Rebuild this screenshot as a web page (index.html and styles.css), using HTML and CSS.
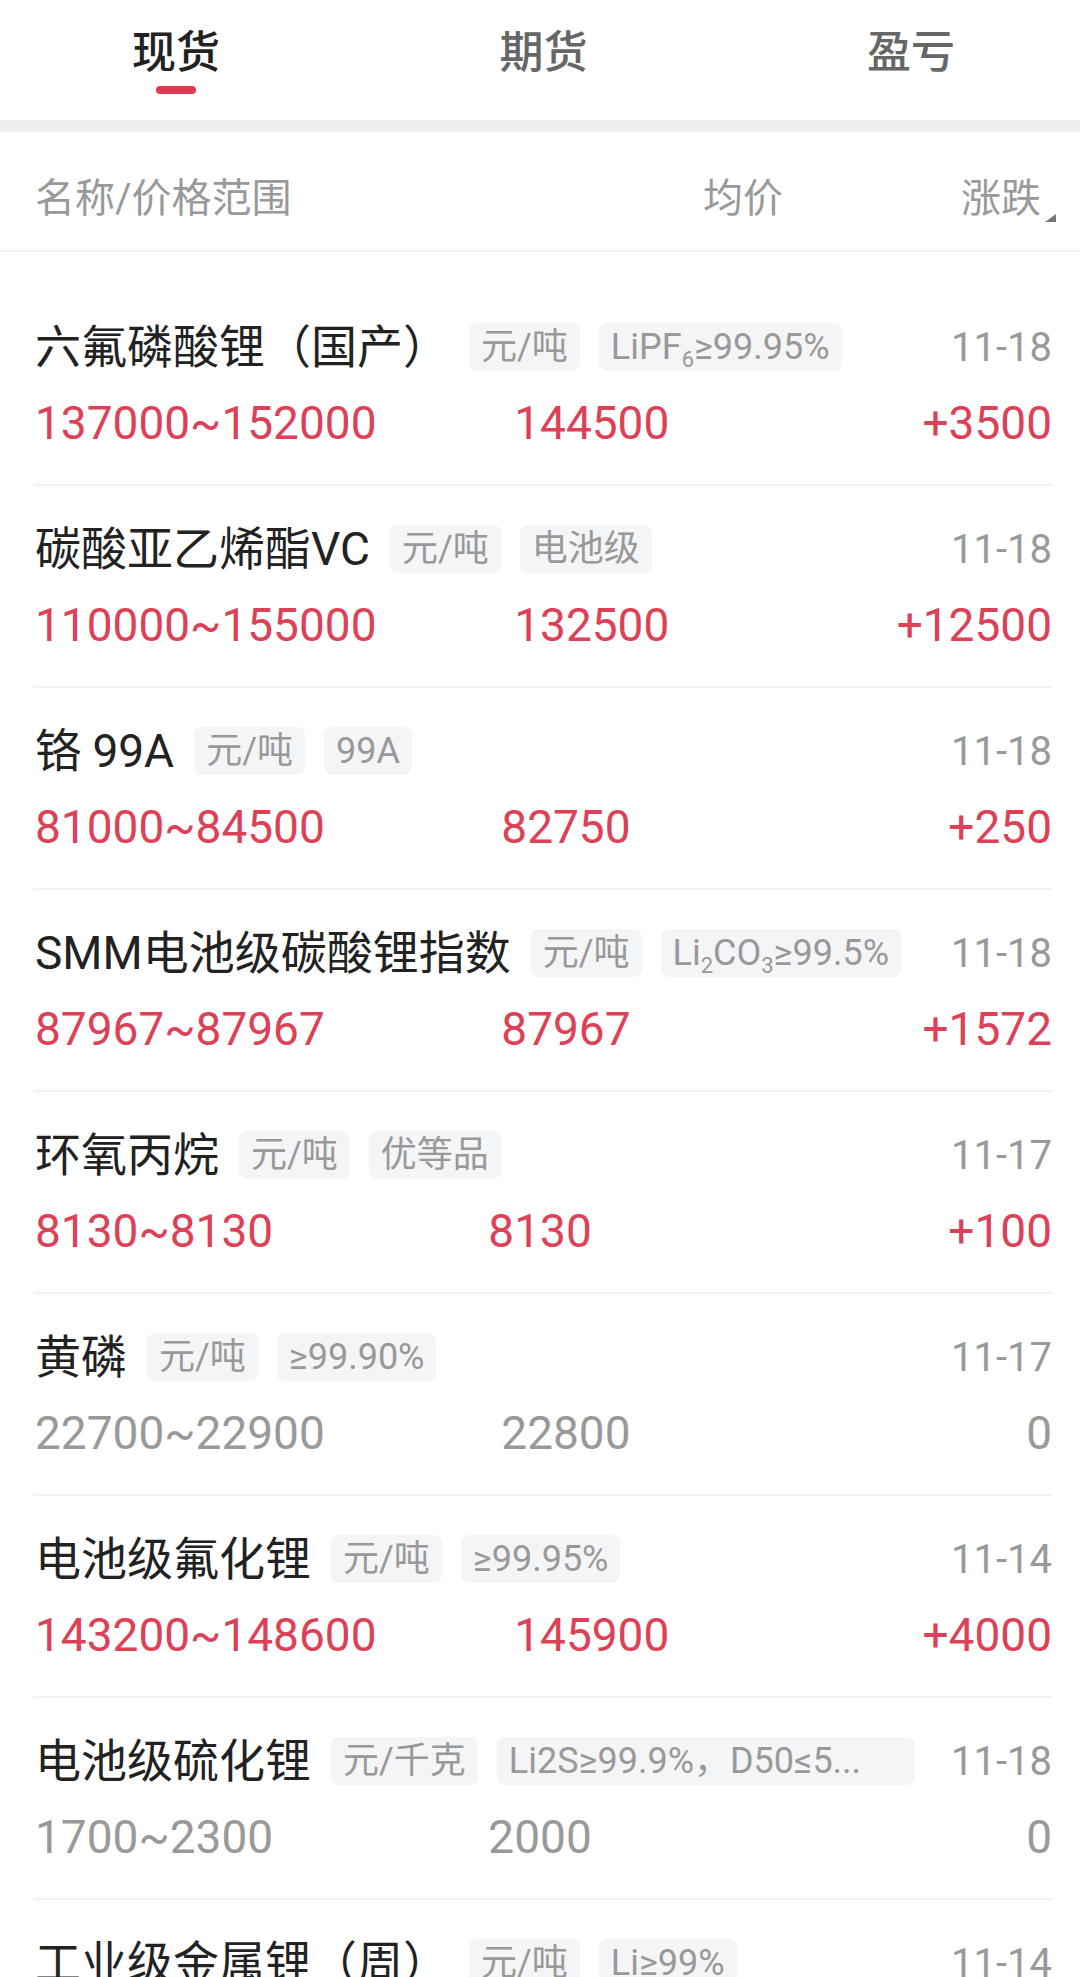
FILE: index.html
```html
<!DOCTYPE html>
<html lang="zh-CN">
<head>
  <meta charset="UTF-8">
  <meta name="viewport" content="width=device-width, initial-scale=1.0">
  <title>现货价格</title>
  <link rel="stylesheet" href="styles.css">
</head>
<body>
  <div class="tabs">
    <div class="tab active">现货<span class="tab-bar"></span></div>
    <div class="tab">期货<span class="tab-bar"></span></div>
    <div class="tab">盈亏<span class="tab-bar"></span></div>
  </div>
  <div class="gap"></div>

  <div class="head">
    <div class="head-name">名称/价格范围</div>
    <div class="head-avg">均价</div>
    <div class="head-chg">涨跌<span class="sort"></span></div>
  </div>

  <div class="list">
    <div class="row">
      <div class="row-top">
        <div class="info">
          <span class="name">六氟磷酸锂（国产）</span>
          <span class="tag">元/吨</span>
          <span class="tag">LiPF<span class="sub">6</span>≥99.95%</span>
        </div>
        <span class="date">11-18</span>
      </div>
      <div class="prices up">
        <span class="range">137000~152000</span>
        <span class="avg">144500</span>
        <span class="chg">+3500</span>
      </div>
    </div>

    <div class="row">
      <div class="row-top">
        <div class="info">
          <span class="name">碳酸亚乙烯酯VC</span>
          <span class="tag">元/吨</span>
          <span class="tag">电池级</span>
        </div>
        <span class="date">11-18</span>
      </div>
      <div class="prices up">
        <span class="range">110000~155000</span>
        <span class="avg">132500</span>
        <span class="chg">+12500</span>
      </div>
    </div>

    <div class="row">
      <div class="row-top">
        <div class="info">
          <span class="name">铬 99A</span>
          <span class="tag">元/吨</span>
          <span class="tag">99A</span>
        </div>
        <span class="date">11-18</span>
      </div>
      <div class="prices up">
        <span class="range">81000~84500</span>
        <span class="avg">82750</span>
        <span class="chg">+250</span>
      </div>
    </div>

    <div class="row">
      <div class="row-top">
        <div class="info">
          <span class="name">SMM电池级碳酸锂指数</span>
          <span class="tag">元/吨</span>
          <span class="tag">Li<span class="sub">2</span>CO<span class="sub">3</span>≥99.5%</span>
        </div>
        <span class="date">11-18</span>
      </div>
      <div class="prices up">
        <span class="range">87967~87967</span>
        <span class="avg">87967</span>
        <span class="chg">+1572</span>
      </div>
    </div>

    <div class="row">
      <div class="row-top">
        <div class="info">
          <span class="name">环氧丙烷</span>
          <span class="tag">元/吨</span>
          <span class="tag">优等品</span>
        </div>
        <span class="date">11-17</span>
      </div>
      <div class="prices up">
        <span class="range">8130~8130</span>
        <span class="avg">8130</span>
        <span class="chg">+100</span>
      </div>
    </div>

    <div class="row">
      <div class="row-top">
        <div class="info">
          <span class="name">黄磷</span>
          <span class="tag">元/吨</span>
          <span class="tag">≥99.90%</span>
        </div>
        <span class="date">11-17</span>
      </div>
      <div class="prices flat">
        <span class="range">22700~22900</span>
        <span class="avg">22800</span>
        <span class="chg">0</span>
      </div>
    </div>

    <div class="row">
      <div class="row-top">
        <div class="info">
          <span class="name">电池级氟化锂</span>
          <span class="tag">元/吨</span>
          <span class="tag">≥99.95%</span>
        </div>
        <span class="date">11-14</span>
      </div>
      <div class="prices up">
        <span class="range">143200~148600</span>
        <span class="avg">145900</span>
        <span class="chg">+4000</span>
      </div>
    </div>

    <div class="row">
      <div class="row-top">
        <div class="info">
          <span class="name">电池级硫化锂</span>
          <span class="tag">元/千克</span>
          <span class="tag tag-long">Li2S≥99.9%，D50≤5...</span>
        </div>
        <span class="date">11-18</span>
      </div>
      <div class="prices flat">
        <span class="range">1700~2300</span>
        <span class="avg">2000</span>
        <span class="chg">0</span>
      </div>
    </div>

    <div class="row">
      <div class="row-top">
        <div class="info">
          <span class="name">工业级金属锂（周）</span>
          <span class="tag">元/吨</span>
          <span class="tag">Li≥99%</span>
        </div>
        <span class="date">11-14</span>
      </div>
    </div>
  </div>
</body>
</html>
```

FILE: styles.css
```css
html, body {
  margin: 0;
  padding: 0;
}
body {
  width: 1080px;
  height: 1977px;
  overflow: hidden;
  background: #fff;
  font-family: Roboto, "Noto Sans CJK SC", sans-serif;
  color: #222;
}

.tabs {
  height: 120px;
  display: flex;
  justify-content: space-between;
  padding: 0 125px 0 132px;
  box-sizing: border-box;
}
.tab {
  display: flex;
  flex-direction: column;
  align-items: center;
  padding-top: 27px;
  font-size: 44px;
  line-height: 52px;
  font-weight: 500;
  color: #666;
}
.tab.active {
  color: #222;
}
.tab-bar {
  width: 40px;
  height: 8px;
  margin-top: 7px;
  border-radius: 4px;
}
.tab.active .tab-bar {
  background: #e23a50;
}

.gap {
  height: 12px;
  background: #eeeeee;
}

.head {
  height: 110px;
  padding: 8px 24px 0 35px;
  display: flex;
  align-items: center;
  border-bottom: 2px solid #f2f2f2;
  font-size: 40px;
  color: #999;
}
.head-name {
  flex: 1;
}
.head-avg {
  margin-right: 178px;
}
.head-chg {
  position: relative;
  padding-right: 15px;
}
.sort {
  position: absolute;
  right: 0;
  bottom: 2px;
  width: 0;
  height: 0;
  border-left: 11px solid transparent;
  border-bottom: 8px solid #777;
}

.list {
  padding-top: 32px;
}
.row {
  margin: 0 28px 0 33px;
  padding: 39px 0 33px 2px;
  border-bottom: 2px solid #f2f2f2;
}
.row-top {
  display: flex;
  align-items: center;
  height: 48px;
}
.info {
  flex: 1;
  min-width: 0;
  display: flex;
  align-items: center;
}
.name {
  font-size: 46px;
  line-height: 48px;
  color: #222;
  white-space: nowrap;
  flex-shrink: 0;
  margin-right: 20px;
}
.tag {
  flex-shrink: 0;
  height: 48px;
  line-height: 48px;
  padding: 0 12px;
  margin-right: 19px;
  border-radius: 8px;
  background: #f4f5f7;
  color: #999;
  font-size: 36px;
  white-space: nowrap;
}
.tag-long {
  padding-right: 54px;
}
.sub {
  font-size: 22px;
  vertical-align: -8px;
  line-height: 0;
}
.date {
  flex-shrink: 0;
  margin-left: 14px;
  font-size: 40px;
  color: #999;
}

.prices {
  display: flex;
  align-items: center;
  margin-top: 24px;
  height: 56px;
  font-size: 46px;
}
.prices.up {
  color: #dd4157;
}
.prices.flat {
  color: #999;
}
.range, .avg {
  flex: 1 1 auto;
}
.chg {
  width: 245px;
  text-align: right;
}
```
